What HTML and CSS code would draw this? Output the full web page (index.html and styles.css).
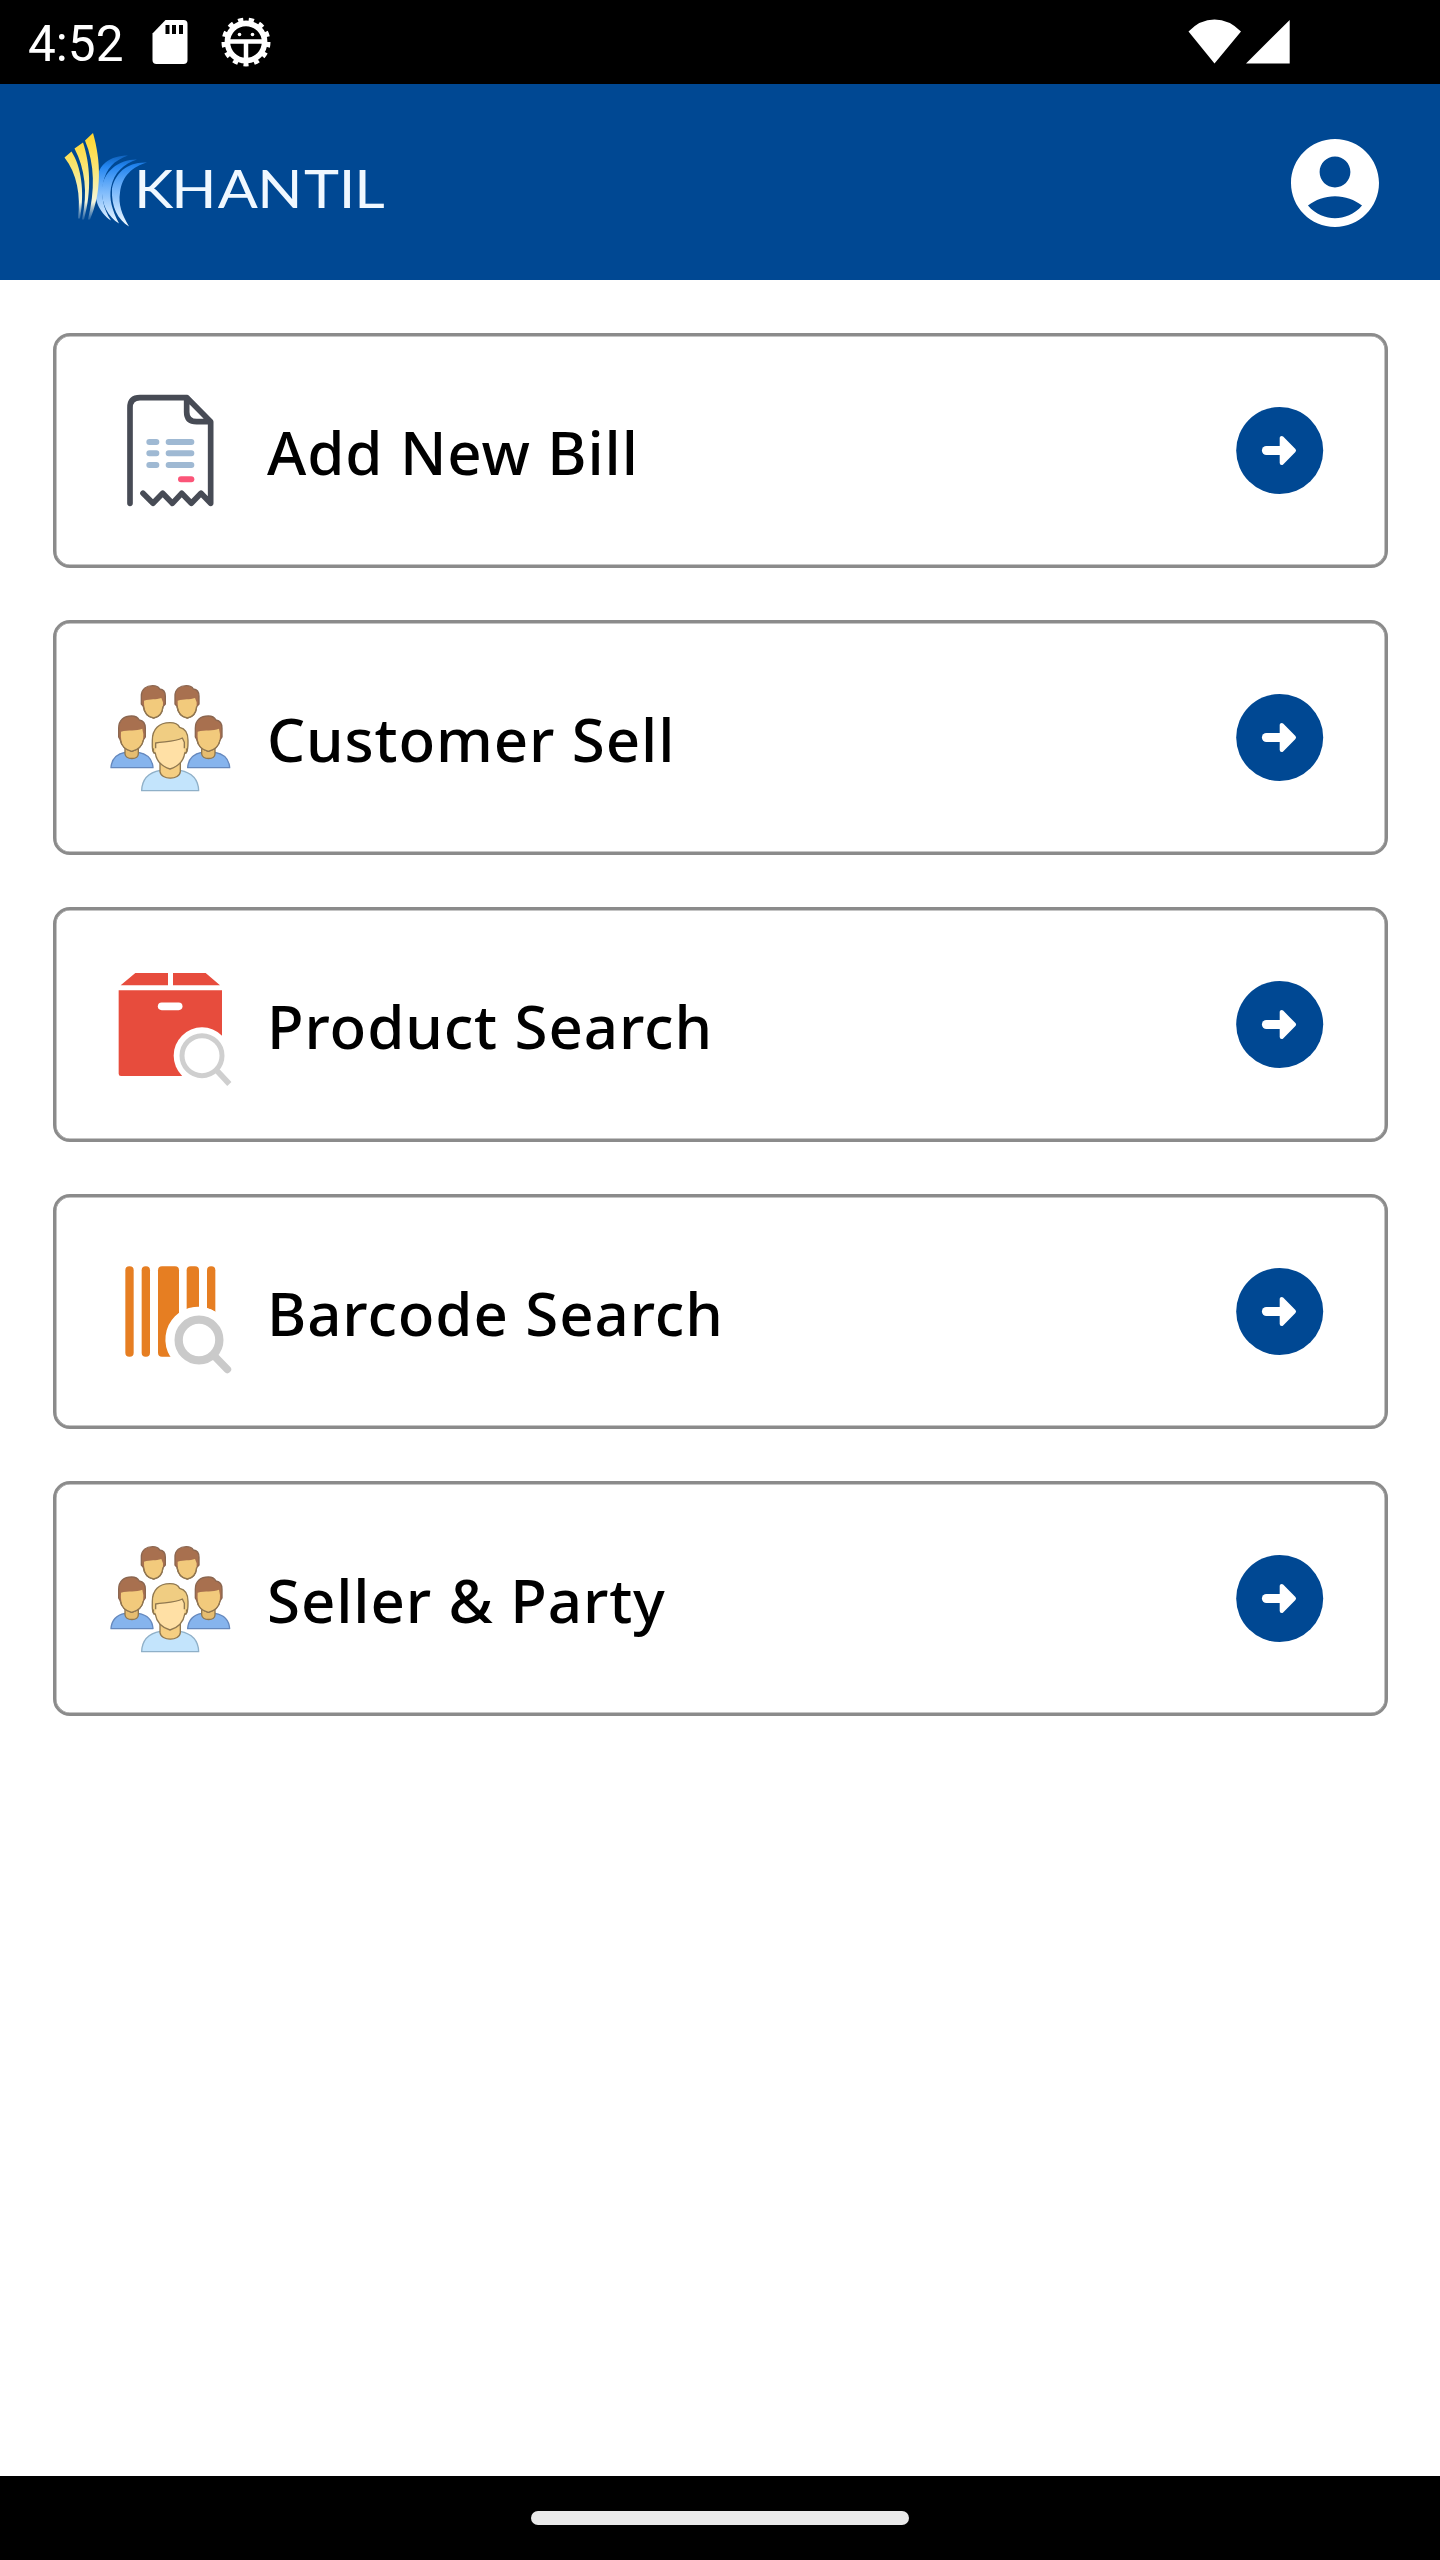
FILE: index.html
```html
<!DOCTYPE html>
<html lang="en">
<head>
<meta charset="utf-8">
<title>Khantil</title>
<link rel="stylesheet" href="styles.css">
</head>
<body>
<svg class="defs" width="0" height="0" aria-hidden="true">
  <defs>
    <symbol id="go" viewBox="0 0 88 88">
      <circle cx="43.700" cy="43.500" r="43.500" fill="#004893"/>
      <path d="M45.700 31V56L58 43.500Z" fill="#fff" stroke="#fff" stroke-width="4" stroke-linejoin="round"/>
      <path d="M30.400 43.500H46" stroke="#fff" stroke-width="9" stroke-linecap="round"/>
    </symbol>
    <symbol id="people" viewBox="0 -7 480 480">
      <g stroke-width="4" stroke="#907850" stroke-linejoin="round">
        <g id="pair">
          <path d="M154 131V107C154 86 169 76 188 76C199 76 206 80 209 86C220 87 226 95 226 108V131L219 139C217 159 206 171 191 173C174 170 163 159 160 138Z" fill="#a8704f" stroke="#8b6650"/>
          <path d="M162 121C181 115 198 119 214 113L219 126C220 154 209 170 191 173C173 169 161 154 162 121Z" fill="#f2ca7c" stroke="none"/>
          <path d="M160 138C163 158 174 170 191 173C207 170 217 158 219 138" fill="none"/>
        </g>
        <use href="#pair" x="101"/>
        <g id="side">
          <path d="M63 322C65 293 84 280 105 276H145C169 280 187 294 189 322Z" fill="#86b4ed" stroke="#6588bd"/>
          <path d="M105 260V281C108 299 144 299 145 281V260Z" fill="#e6bd70"/>
          <path d="M86 230V204C86 179 102 167 125 167C137 167 144 172 148 179C160 181 166 188 166 204V230L160 239C157 258 143 269 125 273C106 268 94 257 91 239Z" fill="#a8704f" stroke="#8b6650"/>
          <path d="M93 214C115 207 139 213 157 205L160 222C161 254 145 269 125 273C105 268 90 254 93 214Z" fill="#f2ca7c" stroke="none"/>
          <path d="M91 239C94 257 106 268 125 273C144 268 157 257 160 239" fill="none"/>
        </g>
        <use href="#side" x="230"/>
        <path d="M155 391C156 354 178 336 211 330H270C302 336 325 355 326 391Z" fill="#c3e4fc" stroke="#8fb0c8"/>
        <path d="M210 308V334C213 360 269 360 271 334V308Z" fill="#f5ce82"/>
        <path d="M192 278C185 270 187 260 187 240C187 206 207 187 240 187C255 187 265 193 269 201C287 205 294 219 294 240C294 260 295 270 288 278Z" fill="#f0cd82"/>
        <path d="M197 248C224 243 255 245 277 233L283 246C287 290 277 311 240 326C203 310 192 288 197 248Z" fill="#ffe0a5" stroke="none"/>
        <path d="M192 266C188 266 188 277 196 279C200 305 215 318 240 326C265 318 280 305 284 279C292 277 292 266 288 266M197 264V248C224 243 255 245 277 233L283 246V264" fill="none"/>
      </g>
    </symbol>
  </defs>
</svg>

<div class="screen">
  <div class="status">
    <span class="clock">4:52</span>
    <svg class="sd" viewBox="0 0 36 46"><path d="M13.500 1H31.500Q35.500 1 35.500 5V41Q35.500 45 31.500 45H4.500Q0.500 45 0.500 41V14.500Z" fill="#fff"/><path d="M13.500 6h4v9h-4zM20 6h4v9h-4zM27 6h4v9h-4z"/></svg>
    <svg class="gear" viewBox="-25 -25 50 50" fill="none" stroke="#fff">
      <circle r="18.600" stroke-width="5.600"/>
      <circle r="21.700" stroke-width="5.600" pathLength="130" stroke-dasharray="4.800 5.200" stroke-dashoffset="2.400" transform="rotate(90)"/>
      <path d="M-17-.5H17M0 0V18" stroke-width="4.500"/>
      <circle cx="-6.500" cy="-7.500" r="1.800" fill="#fff" stroke="none"/><circle cx="6.500" cy="-7.500" r="1.800" fill="#fff" stroke="none"/>
    </svg>
    <svg class="signal" viewBox="0 0 104 46"><path d="M0.500 12.500Q12 0.500 26.500 0.500T53 12.500L26.500 44.500ZM58 44.500L101.700 1V44.500Z" fill="#fff"/></svg>
  </div>

  <header class="bar">
    <svg class="logo" viewBox="50 121.500 350 120" role="img" aria-label="Khantil">
      <defs>
        <linearGradient id="gold" x1="0" y1="132" x2="0" y2="219" gradientUnits="userSpaceOnUse"><stop offset="0" stop-color="#ffd52c"/><stop offset=".45" stop-color="#f9e77c"/><stop offset=".8" stop-color="#f4f5dc"/><stop offset="1" stop-color="#b8d0e4" stop-opacity=".2"/></linearGradient>
        <linearGradient id="sky" x1="0" y1="155" x2="0" y2="226" gradientUnits="userSpaceOnUse"><stop offset="0" stop-color="#0f62bd"/><stop offset=".15" stop-color="#2385f0"/><stop offset=".5" stop-color="#7bb9fb"/><stop offset="1" stop-color="#f4fbff"/></linearGradient>
      </defs>
      <g fill="url(#sky)">
        <path d="M128 155C110 155 98 164 97 180C92 197 99 212 111 220C103 208 101 195 103 183C106 168 114 160 128 155Z"/>
        <path d="M137 159C117 159 104 172 102 187C101 204 108 216 119 223C112 209 109 199 111 187C114 172 124 163 137 159Z"/>
        <path d="M147 162C127 161 115 173 112 188C111 207 118 219 129 226C122 214 118 204 120 192C122 175 133 166 147 162Z"/>
      </g>
      <g fill="url(#gold)">
        <path d="M64.500 157L71.500 151C81 166 85 190 80 218H78C81 195 77 173 64.500 157Z"/>
        <path d="M74.500 148L83 142C90 163 92 190 84 219H82C88 192 85 168 74.500 148Z"/>
        <path d="M85 140L93 132.500C101 160 102 192 90 219H88C95 190 95 164 85 140Z"/>
      </g>
      <text class="wordmark" transform="translate(-3 207.500) scale(1.12 1)" x="122.300 155.500 197 232.300 274.200 305.200 319" y="0">KHANTIL</text>
    </svg>
    <svg class="account" viewBox="2 2 20 20"><path fill="#fff" d="M12 2C6.480 2 2 6.480 2 12s4.480 10 10 10 10-4.480 10-10S17.520 2 12 2zm0 4c1.930 0 3.500 1.570 3.500 3.500S13.930 13 12 13s-3.500-1.570-3.500-3.500S10.070 6 12 6zm0 14c-2.030 0-4.430-.820-6.140-2.880C7.550 15.800 9.680 15 12 15s4.450.800 6.140 2.120C16.430 19.180 14.030 20 12 20z"/></svg>
  </header>

  <main class="menu">
    <div class="card">
      <svg class="icon" viewBox="0 2 480 480" fill="none" stroke-linecap="round" stroke-linejoin="round">
        <path d="M120 399V112Q120 82 150 82H291L362 154V399L333 369L304 399L275 369L247 399L218 369L189 399L159 369M290 84V125Q290 154 320 154H360" stroke="#474b55" stroke-width="17"/>
        <path d="M178 215h21M236 215h68M178 249h21M236 249h68M178 284h21M236 284h68" stroke="#9fb9d3" stroke-width="18"/>
        <path d="M273 327h31" stroke="#fb5578" stroke-width="18"/>
      </svg>
      <span class="label">Add New Bill</span>
      <svg class="go"><use href="#go"/></svg>
    </div>
    <div class="card">
      <svg class="icon"><use href="#people"/></svg>
      <span class="label">Customer Sell</span>
      <svg class="go"><use href="#go"/></svg>
    </div>
    <div class="card">
      <svg class="icon" viewBox="0 14 480 480">
        <path d="M136 98H234V135H92ZM249 98H347L390 135H249ZM86 150H396V407H93Q86 407 86 400Z" fill="#e74c3d"/>
        <path d="M215 198h51" stroke="#fff" stroke-width="23" stroke-linecap="round"/>
        <circle cx="336" cy="346" r="85" fill="#fff"/>
        <circle cx="336" cy="346" r="60" fill="none" stroke="#cfcfcf" stroke-width="15"/>
        <path d="M379 389L418 431" stroke="#cfcfcf" stroke-width="17"/>
      </svg>
      <span class="label">Product Search</span>
      <svg class="go"><use href="#go"/></svg>
    </div>
    <div class="card">
      <svg class="icon" viewBox="0 -25 480 480">
        <g fill="#e67e22"><rect x="106" y="78" width="25" height="271" rx="12"/><rect x="155" y="78" width="25" height="271" rx="12"/><rect x="204" y="78" width="63" height="271" rx="12"/><rect x="290" y="78" width="37" height="150" rx="12"/><rect x="351" y="78" width="25" height="160" rx="12"/></g>
        <path d="M241 349A98 98 0 0 1 376 214V349Z" fill="#fff"/>
        <circle cx="327" cy="299" r="98" fill="#fff"/>
        <circle cx="327" cy="299" r="61" fill="none" stroke="#cacaca" stroke-width="25"/>
        <path d="M372 346L412 387" stroke="#cacaca" stroke-width="23" stroke-linecap="round"/>
      </svg>
      <span class="label">Barcode Search</span>
      <svg class="go"><use href="#go"/></svg>
    </div>
    <div class="card">
      <svg class="icon"><use href="#people"/></svg>
      <span class="label">Seller &amp; Party</span>
      <svg class="go"><use href="#go"/></svg>
    </div>
  </main>

  <div class="nav"><div class="pill"></div></div>
</div>
</body>
</html>
```
FILE: styles.css
```css
* { box-sizing: border-box; }
body { margin: 0; background: #fff; }
.defs { display: none; }
svg { display: block; flex: none; }

.screen {
  display: flex;
  flex-direction: column;
  width: 1440px;
  height: 2560px;
  font-family: "Noto Sans", "Open Sans", sans-serif;
}

.status {
  display: flex;
  align-items: center;
  height: 84px;
  padding: 0 148px 0 28px;
  background: #000;
  color: #fff;
}
.clock {
  width: 124px;
  padding-top: 4px;
  font: 49.500px/56px Roboto, sans-serif;
}
.sd { width: 36px; height: 46px; }
.gear { width: 50px; height: 50px; margin-left: 33px; }
.signal { width: 104px; height: 46px; margin-left: auto; }

.bar {
  display: flex;
  align-items: center;
  justify-content: space-between;
  height: 196px;
  padding: 0 61px 0 50px;
  background: #004893;
}
.logo { width: 350px; height: 120px; }
.wordmark { font: 53px Lato, sans-serif; fill: #f0f8ff; }
.account { width: 88px; height: 88px; margin-top: 1px; }

.menu {
  display: flex;
  flex-direction: column;
  flex: 1;
  gap: 52px;
  padding: 53px 52px 0 53px;
}
.card {
  display: flex;
  align-items: center;
  height: 235px;
  padding: 0 61px 0 34px;
  border: 3px solid #8b8b8b;
  border-radius: 17px;
  box-shadow: inset 0 0 0 0.5px #8b8b8b;
}
.icon { width: 160px; height: 160px; }
.label {
  flex: 1;
  margin-left: 17px;
  padding-top: 3px;
  font-size: 60px;
  font-weight: 500;
  line-height: 80px;
  letter-spacing: 0.9px;
  color: #000;
}
.go { width: 88px; height: 88px; }

.nav {
  display: flex;
  align-items: center;
  justify-content: center;
  height: 84px;
  background: #000;
}
.pill { width: 378px; height: 14px; border-radius: 7px; background: #eaeaea; }
```
